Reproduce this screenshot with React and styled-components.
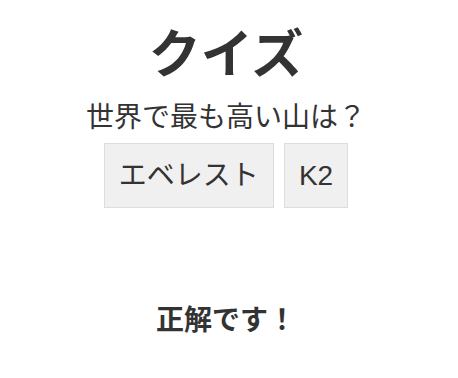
import styled, { createGlobalStyle } from "styled-components";

const GlobalStyle = createGlobalStyle`
  body {
    margin: 0;
    background: #fff;
    font-family: "Liberation Sans", "Noto Sans CJK JP", sans-serif;
    color: #333;
  }
`;

const choices = ["エベレスト", "K2"];

const Quiz = styled.div`
  display: flex;
  flex-direction: column;
  align-items: center;
  padding: 20px 6px 0 0;
`;

const Title = styled.h1`
  margin: 0;
  font-size: 52px;
  font-weight: 700;
  line-height: 70px;
`;

const Question = styled.p`
  margin: 8px 0 0;
  font-size: 28px;
  line-height: 40px;
`;

const Choices = styled.div`
  display: flex;
  gap: 10px;
  margin-top: 5px;
`;

const Choice = styled.button`
  font-family: inherit;
  font-size: 28px;
  line-height: 35px;
  color: #333;
  background: #f0f0f0;
  border: 1px solid #ddd;
  padding: 14px 14px;
  cursor: pointer;
`;

const Result = styled.p`
  margin: 93px 0 0;
  font-size: 28px;
  font-weight: 700;
  line-height: 40px;
`;

export default function App() {
  return (
    <>
      <GlobalStyle />
      <Quiz>
        <Title>クイズ</Title>
        <Question>世界で最も高い山は？</Question>
        <Choices>
          {choices.map((c) => (
            <Choice key={c}>{c}</Choice>
          ))}
        </Choices>
        <Result>正解です！</Result>
      </Quiz>
    </>
  );
}
